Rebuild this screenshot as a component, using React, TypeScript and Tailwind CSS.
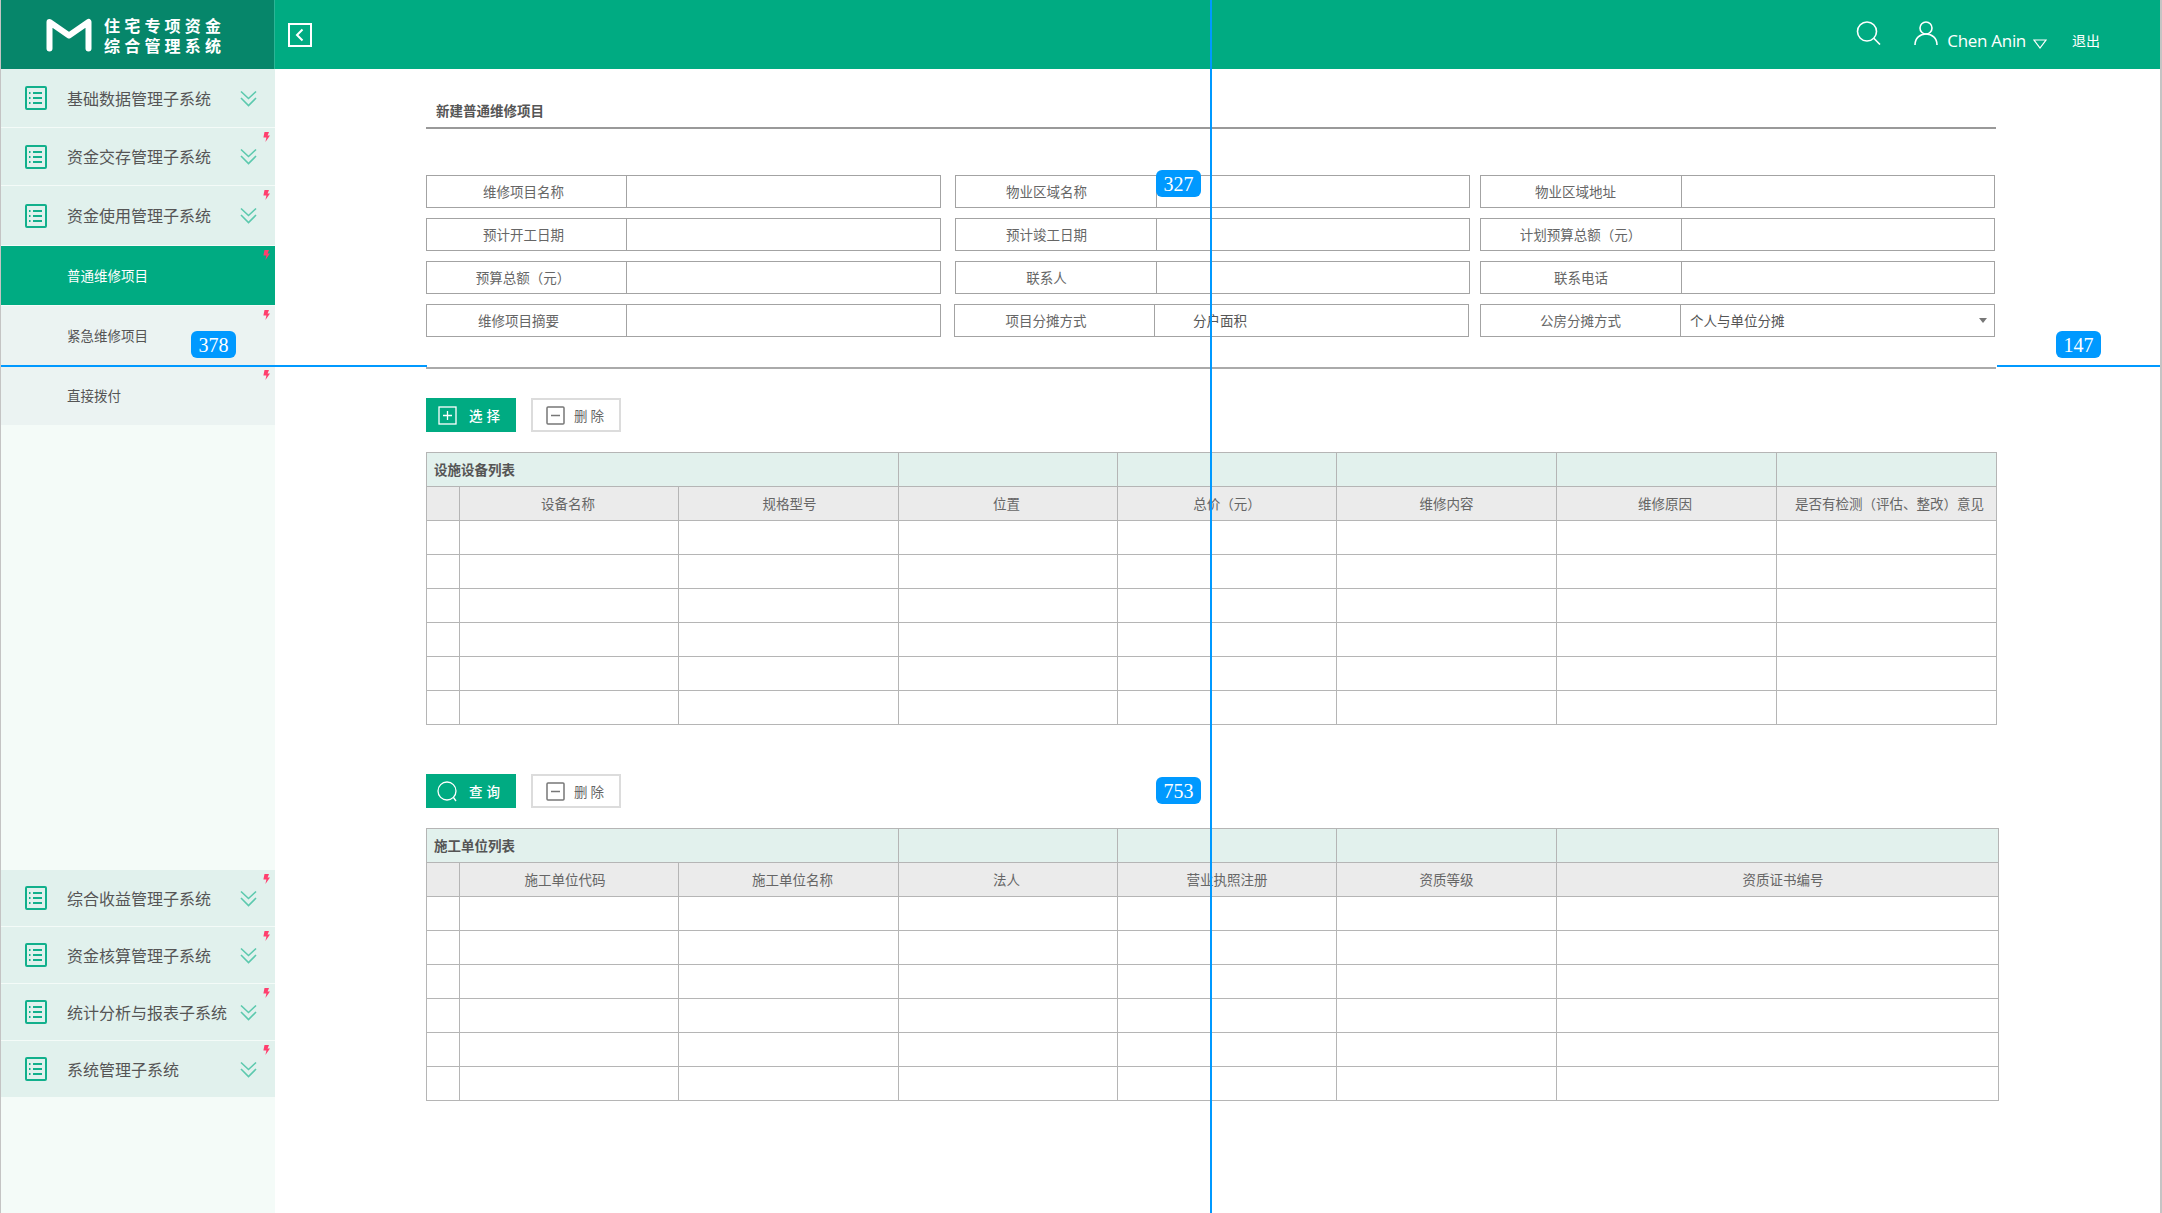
const cjk = "font-['Noto_Sans_CJK_SC','Liberation_Sans',sans-serif]";

function ListIcon() {
  return (
    <svg width="22" height="24" viewBox="0 0 22 24" fill="none" stroke="#12b08c" strokeWidth="2" className="shrink-0">
      <rect x="1" y="1" width="20" height="22" rx="1" />
      <path d="M8 7h9M8 12h9M8 17h9" />
      <path d="M4 7h1.5M4 12h1.5M4 17h1.5" />
    </svg>
  );
}

function DoubleChevron() {
  return (
    <svg width="17" height="17" viewBox="0 0 17 17" fill="none" stroke="#5cc9ae" strokeWidth="1.6" className="shrink-0">
      <path d="M1 1.5L8.5 8.5L16 1.5" />
      <path d="M1 8L8.5 15.5L16 8" />
    </svg>
  );
}

function Bolt() {
  return (
    <svg width="7" height="10" viewBox="0 0 7 10" fill="#ff3f6e" className="absolute top-[4px] right-[5px]">
      <path d="M1.5 0H6L4.6 3.4H7L2.4 10L3.4 5.4H0.4Z" />
    </svg>
  );
}

function NavItem({ text, bolt = true }: { text: string; bolt?: boolean }) {
  return (
    <div className="relative flex h-[57px] items-center bg-[#e1f1ed] pl-[24px]">
      <ListIcon />
      <span className="-mt-[1px] ml-[20px] w-[173px] text-[16px] whitespace-nowrap text-[#555]">{text}</span>
      <DoubleChevron />
      {bolt && <Bolt />}
    </div>
  );
}

function SubItem({ text, active }: { text: string; active?: boolean }) {
  return (
    <div className={`relative flex h-[59px] items-center pl-[66px] text-[13.5px] ${active ? "bg-[#00ab82] text-white" : "bg-[#ebf3f2] text-[#555]"}`}>
      {text}
      <Bolt />
    </div>
  );
}

function Field({ label, value, w, labelW, ml, offset, arrow }: { label: string; value?: string; w: string; labelW: string; ml: string; offset?: string; arrow?: boolean }) {
  return (
    <div className={`flex h-[33px] border border-[#a3a3a3] ${w} ${ml}`}>
      <div className={`flex items-center justify-center border-r border-[#a3a3a3] text-[13.5px] text-[#666] ${labelW} ${offset ?? ""}`}>{label}</div>
      <div className="relative flex flex-1 items-center text-[13.5px] text-[#555]">
        {value && <span className={arrow ? "pl-[9px]" : "pl-[38px]"}>{value}</span>}
        {arrow && <span className="absolute top-[13px] right-[7px] h-0 w-0 border-x-[4px] border-t-[5px] border-x-transparent border-t-[#777]" />}
      </div>
    </div>
  );
}

type Head = { t: string; c?: string };

function DataTable({ title, cols, heads, widthClass }: { title: string; cols: string[]; heads: Head[]; widthClass: string }) {
  const rows = [0, 1, 2, 3, 4, 5];
  return (
    <table className={`table-fixed border-collapse text-[13.5px] ${widthClass}`}>
      <colgroup>
        {cols.map((c, i) => (
          <col key={i} className={c} />
        ))}
      </colgroup>
      <tbody>
        <tr className="h-[34px] bg-[#e2f1ed]">
          <td colSpan={3} className="border border-[#b5b5b5] pl-[7px] font-bold text-[#555]">{title}</td>
          {cols.slice(3).map((_, i) => (
            <td key={i} className="border border-[#b5b5b5]" />
          ))}
        </tr>
        <tr className="h-[34px] bg-[#ebebeb]">
          <td className="border border-[#b5b5b5]" />
          {heads.map((h) => (
            <td key={h.t} className={`border border-[#b5b5b5] text-center whitespace-nowrap text-[#666] ${h.c ?? ""}`}>{h.t}</td>
          ))}
        </tr>
        {rows.map((r) => (
          <tr key={r} className="h-[34px]">
            {cols.map((_, i) => (
              <td key={i} className="border border-[#b5b5b5]" />
            ))}
          </tr>
        ))}
      </tbody>
    </table>
  );
}

function DeleteButton() {
  return (
    <button className="ml-[15px] flex h-[34px] w-[90px] items-center border-2 border-[#dcdcdc] bg-white pl-[13px] text-[13.5px] tracking-[3px] text-[#666]">
      <svg width="19" height="19" viewBox="0 0 19 19" fill="none" stroke="#777" strokeWidth="1.5" className="mr-[9px]">
        <rect x="1" y="1" width="17" height="17" rx="1" />
        <path d="M5 9.5h9" />
      </svg>
      删除
    </button>
  );
}

function Badge({ text, className }: { text: string; className: string }) {
  return (
    <div className={`absolute z-40 flex h-[27px] w-[45px] items-center justify-center rounded-[6px] bg-[#0099ff] font-['Liberation_Serif',serif] text-[20px] text-white ${className}`}>
      {text}
    </div>
  );
}

const cols1 = ["w-[33px]", "w-[219px]", "w-[220px]", "w-[219px]", "w-[219px]", "w-[220px]", "w-[220px]", "w-[220px]"];
const cols2 = ["w-[33px]", "w-[219px]", "w-[220px]", "w-[219px]", "w-[219px]", "w-[220px]", "w-[442px]"];

export default function App() {
  return (
    <div className={`relative h-[1213px] w-[2162px] overflow-hidden border-r-2 border-l border-[#c4c4c4] bg-white ${cjk}`}>
      {/* 顶部 */}
      <header className="flex h-[69px] bg-[#00ab82] text-white">
        <div className="flex w-[274px] items-center border-r border-[#2bb596] bg-[#06866a] pl-[45px]">
          <svg width="46" height="34" viewBox="0 0 46 34" fill="none" stroke="white" strokeWidth="6" strokeLinejoin="round" strokeLinecap="round">
            <path d="M3.5 30.5V4L23 17.5L42.5 4V30.5" />
          </svg>
          <div className="mt-[1px] ml-[12px] text-[16px] leading-[20px] font-bold tracking-[4.2px]">
            <div>住宅专项资金</div>
            <div>综合管理系统</div>
          </div>
        </div>
        <div className="ml-[13px] flex items-center">
          <svg width="24" height="24" viewBox="0 0 24 24" fill="none" stroke="white" strokeWidth="2">
            <rect x="1" y="1" width="22" height="22" />
            <path d="M14.5 6.5L9 12L14.5 17.5" />
          </svg>
        </div>
        <div className="ml-auto flex items-center pr-[60px]">
          <svg width="25" height="24" viewBox="0 0 25 24" fill="none" stroke="white" strokeWidth="1.6" className="-mt-[3px]">
            <circle cx="11" cy="10.5" r="9.5" />
            <path d="M17.8 17.2L24 23.5" />
          </svg>
          <svg width="24" height="24" viewBox="0 0 24 24" fill="none" stroke="white" strokeWidth="1.6" className="-mt-[3px] ml-[33px]">
            <circle cx="12" cy="7" r="6" />
            <path d="M1 24C1 17 6 13 12 13C18 13 23 17 23 24" />
          </svg>
          <span className="mt-[12px] ml-[9px] font-['Open_Sans',sans-serif] text-[17px] tracking-[-0.3px]">Chen Anin</span>
          <svg width="14" height="10" viewBox="0 0 14 10" fill="none" stroke="white" strokeWidth="1.2" className="mt-[18px] ml-[7px]">
            <path d="M1 1h12L7 9Z" />
          </svg>
          <span className="mt-[12px] ml-[25px] text-[14px]">退出</span>
        </div>
      </header>

      <div className="flex">
        {/* 侧边栏 */}
        <aside className="flex h-[1144px] w-[274px] shrink-0 flex-col bg-[#f4fbf8]">
          <div className="flex flex-col gap-[1px]">
            <div className="[&>div]:h-[58px]">
              <NavItem text="基础数据管理子系统" bolt={false} />
            </div>
            <NavItem text="资金交存管理子系统" />
            <div className="[&>div]:h-[59px]">
              <NavItem text="资金使用管理子系统" />
            </div>
            <SubItem text="普通维修项目" active />
            <SubItem text="紧急维修项目" />
            <SubItem text="直接拨付" />
          </div>
          <div className="mt-[445px] flex flex-col gap-[1px] [&>div]:h-[56px]">
            <NavItem text="综合收益管理子系统" />
            <NavItem text="资金核算管理子系统" />
            <NavItem text="统计分析与报表子系统" />
            <NavItem text="系统管理子系统" />
          </div>
        </aside>

        {/* 内容 */}
        <main className="pl-[151px]">
          <div className="flex h-[60px] w-[1570px] items-center border-b-2 border-[#999] pt-[25px] pl-[10px] text-[13.5px] font-bold text-[#555]">
            新建普通维修项目
          </div>

          <div className="mt-[46px] flex flex-col gap-[10px]">
            <div className="flex">
              <Field label="维修项目名称" w="w-[515px]" labelW="w-[200px]" ml="" offset="pr-[6px]" />
              <Field label="物业区域名称" w="w-[515px]" labelW="w-[201px]" ml="ml-[14px]" offset="pr-[19px]" />
              <Field label="物业区域地址" w="w-[515px]" labelW="w-[201px]" ml="ml-[10px]" offset="pr-[11px]" />
            </div>
            <div className="flex">
              <Field label="预计开工日期" w="w-[515px]" labelW="w-[200px]" ml="" offset="pr-[6px]" />
              <Field label="预计竣工日期" w="w-[515px]" labelW="w-[201px]" ml="ml-[14px]" offset="pr-[19px]" />
              <Field label="计划预算总额（元）" w="w-[515px]" labelW="w-[201px]" ml="ml-[10px]" offset="pr-[1px]" />
            </div>
            <div className="flex">
              <Field label="预算总额（元）" w="w-[515px]" labelW="w-[200px]" ml="" offset="pr-[7px]" />
              <Field label="联系人" w="w-[515px]" labelW="w-[201px]" ml="ml-[14px]" offset="pr-[19px]" />
              <Field label="联系电话" w="w-[515px]" labelW="w-[201px]" ml="ml-[10px]" />
            </div>
            <div className="flex">
              <Field label="维修项目摘要" w="w-[515px]" labelW="w-[200px]" ml="" offset="pr-[16px]" />
              <Field label="项目分摊方式" value="分户面积" w="w-[515px]" labelW="w-[200px]" ml="ml-[13px]" offset="pr-[17px]" />
              <Field label="公房分摊方式" value="个人与单位分摊" arrow w="w-[515px]" labelW="w-[200px]" ml="ml-[11px]" />
            </div>
          </div>

          <div className="relative z-20 mt-[30px] h-[2px] w-[1570px] bg-[#aaa]" />

          <div className="mt-[29px] flex">
            <button className="flex h-[34px] w-[90px] items-center bg-[#00ab82] pl-[12px] text-[13.5px] font-medium tracking-[4px] text-white">
              <svg width="19" height="19" viewBox="0 0 19 19" fill="none" stroke="white" strokeWidth="1.3" className="mr-[12px]">
                <rect x="1" y="1" width="17" height="17" />
                <path d="M9.5 5v9M5 9.5h9" />
              </svg>
              选择
            </button>
            <DeleteButton />
          </div>

          <div className="mt-[20px]">
            <DataTable
              title="设施设备列表"
              cols={cols1}
              heads={[
                { t: "设备名称", c: "pr-[2px]" },
                { t: "规格型号", c: "pl-[2px]" },
                { t: "位置", c: "pr-[3px]" },
                { t: "总价（元）" },
                { t: "维修内容" },
                { t: "维修原因", c: "pr-[3px]" },
                { t: "是否有检测（评估、整改）意见", c: "pl-[6px]" },
              ]}
              widthClass="w-[1570px]"
            />
          </div>

          <div className="mt-[49px] flex">
            <button className="flex h-[34px] w-[90px] items-center bg-[#00ab82] pl-[11px] text-[13.5px] font-medium tracking-[4px] text-white">
              <svg width="21" height="21" viewBox="0 0 21 21" fill="none" stroke="white" strokeWidth="1.3" className="mr-[11px]">
                <circle cx="10" cy="10" r="9" />
                <path d="M16.5 16.5L19 20" />
              </svg>
              查询
            </button>
            <DeleteButton />
          </div>

          <div className="mt-[20px]">
            <DataTable
              title="施工单位列表"
              cols={cols2}
              heads={[
                { t: "施工单位代码", c: "pr-[8px]" },
                { t: "施工单位名称", c: "pl-[8px]" },
                { t: "法人", c: "pr-[3px]" },
                { t: "营业执照注册" },
                { t: "资质等级" },
                { t: "资质证书编号", c: "pl-[11px]" },
              ]}
              widthClass="w-[1572px]"
            />
          </div>
        </main>
      </div>

      {/* 标注线 */}
      <div className="absolute top-0 left-[1209px] z-30 h-full w-[2px] bg-[#0099ff]" />
      <div className="absolute top-[365px] left-0 z-10 h-[2px] w-[426px] bg-[#0099ff]" />
      <div className="absolute top-[365px] left-[1996px] z-10 h-[2px] w-[166px] bg-[#0099ff]" />
      <Badge text="327" className="top-[170px] left-[1155px]" />
      <Badge text="378" className="top-[331px] left-[190px]" />
      <Badge text="147" className="top-[331px] left-[2055px]" />
      <Badge text="753" className="top-[777px] left-[1155px]" />
    </div>
  );
}
